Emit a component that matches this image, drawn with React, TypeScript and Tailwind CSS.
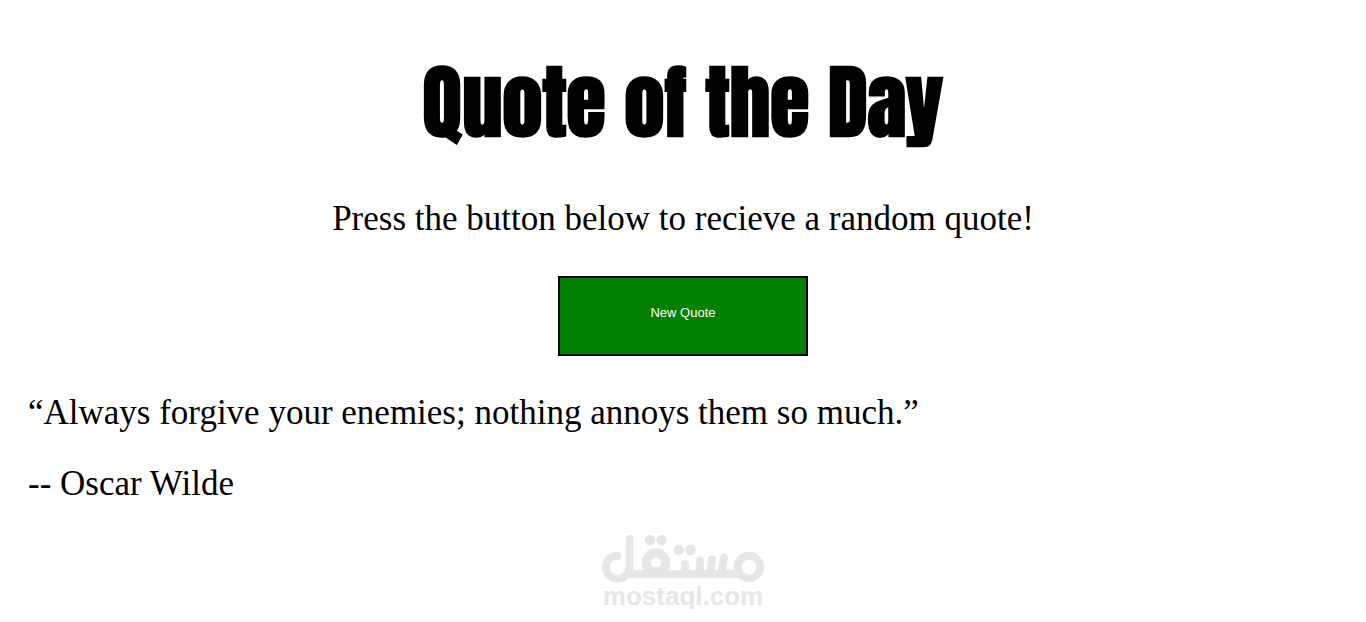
import { useState } from "react";

const quotes = [
  { text: "“Always forgive your enemies; nothing annoys them so much.”", author: "Oscar Wilde" },
];

function Watermark() {
  return (
    <div className="flex flex-col items-center text-[#e6e6e6]">
      <svg
        className="h-[50px] w-[164px]"
        viewBox="0 0 164 50"
        fill="none"
        stroke="currentColor"
        strokeWidth="7.8"
        strokeLinecap="round"
        strokeLinejoin="round"
        aria-hidden="true"
      >
        <path d="M16.500 23.200C10 22.600 5 27.500 5 33.800C5 40.500 10 45.600 16.600 45.600C23.500 45.600 28.500 40.500 28.500 33V6" />
        <path d="M28.500 36V41H138" />
        <circle cx="55" cy="29.500" r="9.700" strokeWidth="9.200" />
        <circle cx="148" cy="34" r="11.300" />
        <path d="M84 31V40M99 28V40M111 26.500L109.500 40M123 24.500L120.500 40" />
        <g fill="currentColor" stroke="none">
          <circle cx="49" cy="7" r="5.200" />
          <circle cx="60.500" cy="7" r="5.200" />
          <circle cx="78" cy="17" r="5.200" />
          <circle cx="89.500" cy="17" r="5.200" />
        </g>
      </svg>
      <p className="font-['Liberation_Sans',sans-serif] text-[26px] leading-[26px] font-bold">mostaql.com</p>
    </div>
  );
}

export default function App() {
  const [index, setIndex] = useState(0);
  const quote = quotes[index];

  return (
    <main className="bg-white px-7 pt-[50px] font-['Liberation_Serif',serif] text-[35px] text-black">
      <h1 className="text-center font-['Impact','Anton','Roboto_Condensed',sans-serif] text-[80px] leading-[104px] font-bold">
        Quote of the Day
      </h1>
      <p className="mt-[45px] text-center leading-10">Press the button below to recieve a random quote!</p>
      <div className="mt-[37px] flex justify-center">
        <button
          type="button"
          onClick={() => setIndex((index + 1) % quotes.length)}
          className="h-20 w-[250px] border-2 border-black bg-[#008000] pb-1.5 font-['Liberation_Sans',sans-serif] text-[13px] leading-4 text-white"
        >
          New Quote
        </button>
      </div>
      <section className="mt-[37px] space-y-[31px] leading-10" aria-live="polite">
        <p>{quote.text}</p>
        <p>-- {quote.author}</p>
      </section>
      <footer className="mt-[29px]">
        <Watermark />
      </footer>
    </main>
  );
}
